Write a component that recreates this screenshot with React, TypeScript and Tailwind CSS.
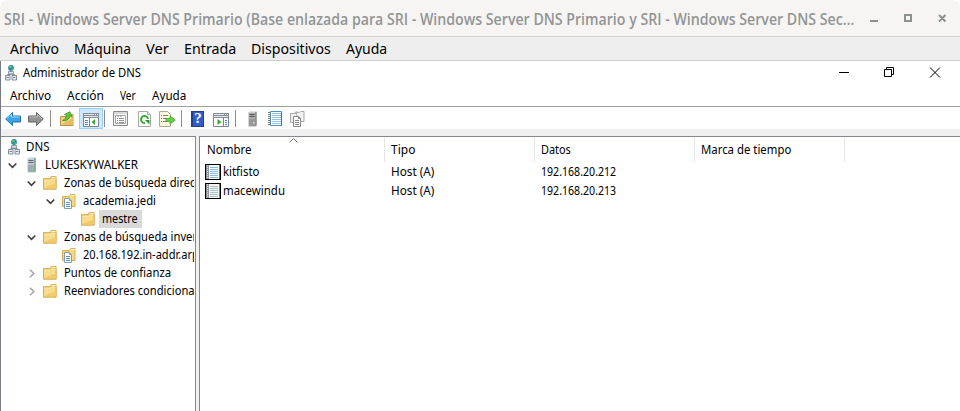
import { useLayoutEffect, useRef, useState, type ReactNode } from "react";

/* Text squeezed or stretched horizontally to a set width. */
function Fit({ w, children, className = "" }: { w: number; children: string; className?: string }) {
  const ref = useRef<HTMLSpanElement>(null);
  const [scale, setScale] = useState(1);
  useLayoutEffect(() => {
    if (ref.current) setScale(w / ref.current.offsetWidth);
  }, [w]);
  return (
    <span className={`block shrink-0 ${className}`} style={{ width: w }}>
      <span ref={ref} className="inline-block origin-left whitespace-pre" style={{ transform: `scaleX(${scale})` }}>
        {children}
      </span>
    </span>
  );
}

function DnsIcon() {
  return (
    <svg width="12" height="16" viewBox="0 0 12 16" className="shrink-0">
      <path d="M6 6v4M2.500 11V9.500h7V11" stroke="#8b949c" fill="none" />
      <circle cx="6" cy="3" r="2.900" fill="#2487b8" />
      <path d="M4 1.500l2-1 1 1.500-1.500 1.500L4 3zM6.500 4l2-1-.5 2-1.500 1z" fill="#63c755" />
      <path d="M3.500 6.500h5v2.500h-5z" fill="#dce3e8" stroke="#7b858e" strokeWidth=".8" />
      <path d="M.5 10.500h4.500V15H.5zM7 10.500h4.500V15H7z" fill="#e8edf1" stroke="#7b858e" strokeWidth=".9" />
      <path d="M1.500 12.500h2.500M8 12.500h2.500" stroke="#7b858e" />
    </svg>
  );
}

function ServerIcon({ light = true }: { light?: boolean }) {
  return (
    <svg width="9" height="16" viewBox="0 0 9 16" className="shrink-0">
      <path d="M.5 1.500l1-1h7v14l-1 1h-7z" fill={light ? "#bfc9d0" : "#adadad"} />
      <path d="M.5 1.500l1-1h7l-1 1z" fill="#e5e9eb" />
      <path d="M7.500 1.500l1-1v14l-1 1z" fill={light ? "#69747c" : "#777"} />
      <path d="M1.500 3.500h5M1.500 5.500h5" stroke={light ? "#5c6971" : "#555"} />
      <path d="M1 8h6v7H1z" fill={light ? "#9eabb4" : "#999"} />
      <path d="M5 11h1.500v1.500H5z" fill={light ? "#69e05b" : "#ddd"} />
    </svg>
  );
}

function FolderIcon() {
  return (
    <svg width="16" height="16" viewBox="0 0 16 16" className="shrink-0">
      <path d="M1 3h7l1-2h5.500v13.500H1z" fill="#e0b459" />
      <path d="M9.500 2h4v2h-4z" fill="#fff6cf" />
      <path d="M1.500 4.500h7l1-1H14V14H1.500z" fill="#f9dc8b" stroke="#dbab4c" />
      <path d="M2 5h6.500l1-1h4" stroke="#fff0bb" fill="none" />
      <path d="M2 13h12V8z" fill="#f2ca6b" />
    </svg>
  );
}

function ZoneIcon() {
  return (
    <svg width="16" height="16" viewBox="0 0 16 16" className="shrink-0">
      <path d="M1.500 3.500h7l1-2h4.500v12H1.500z" fill="#f6d885" stroke="#dbae52" />
      <path d="M9.500 2.500h4" stroke="#fff3c9" />
      <path d="M3.500 5.500h5l2 2v8h-7z" fill="#fff" stroke="#879aaa" />
      <path d="M8.500 5.500v2h2" fill="#d9e3eb" stroke="#879aaa" />
      <path d="M5 9.500h4M5 11.500h4M5 13.500h4" stroke="#4c91cb" />
    </svg>
  );
}

function RecordIcon({ blue }: { blue: boolean }) {
  return (
    <svg width="16" height="16" viewBox="0 0 16 16" className="shrink-0">
      <path d="M0 0h16v16H0z" fill="#000" />
      <path d="M1 1h13v14H1z" fill="#8f969e" />
      <path d="M4 1h10v14H4z" fill={blue ? "#f4faff" : "#f5f4f0"} />
      <path d="M14.500 1v14" stroke={blue ? "#5366ab" : "#737c9f"} />
      <path d="M5 3.500h8M5 5.500h8M5 7.500h8M5 9.500h8M5 11.500h8M5 13.500h8" stroke={blue ? "#85bbdc" : "#a8c1cc"} />
      <path d="M2.500 1v14" stroke="#d8d8d8" strokeDasharray="1 1" />
    </svg>
  );
}

function Arrow({ back = false }: { back?: boolean }) {
  return back ? (
    <svg width="16" height="16" viewBox="0 0 16 16">
      <path d="M.7 8L7.500 1.500V5h8v6h-8v3.500z" fill="#39a4e8" stroke="#246faf" />
      <path d="M2 7.500l4.500-4.300V6h8" fill="none" stroke="#91dcff" />
    </svg>
  ) : (
    <svg width="16" height="16" viewBox="0 0 16 16">
      <path d="M15.300 8L8.500 1.500V5h-8v6h8v3.500z" fill="#929292" stroke="#656565" />
      <path d="M1.500 6h8V3.500L14 8" fill="none" stroke="#bbb" />
    </svg>
  );
}

function UpFolderIcon() {
  return (
    <svg width="16" height="16" viewBox="0 0 16 16">
      <path d="M1.500 5.500H8l1-2h5v11H1.500z" fill="#f3d285" stroke="#bd9549" />
      <path d="M2 14L14 7v7z" fill="#e7bc60" />
      <path d="M3.500 9.500C6 8.500 7 6.500 7.500 4L5.500 3.500 11 .7l2 5-2-.8C10 8 7.500 10.500 3.500 9.500z" fill="#5bc82f" stroke="#35912a" strokeWidth=".7" />
    </svg>
  );
}

function PaneIcon({ right = false }: { right?: boolean }) {
  return (
    <svg width="16" height="14" viewBox="0 0 16 14">
      <path d="M.5.5h15v13H.5z" fill="#fff" stroke="#7d858d" />
      <path d="M0 0h16v5H0z" fill="#858c93" />
      <path d="M1 3.500h14M1 1.500h10" stroke="#e5e8eb" />
      <path d="M12 1.500h1M14 1.500h1" stroke="#fff" />
      {right ? (
        <>
          <path d="M10.500 5v8" stroke="#7d858d" />
          <path d="M12 7.500h2M12 9.500h2M12 11.500h2" stroke="#3989d3" />
          <path d="M4.500 6L8.500 9l-4 3z" fill="#37ac30" />
        </>
      ) : (
        <>
          <path d="M6.500 5v8" stroke="#7d858d" />
          <path d="M2 7.500h3M2 9.500h3M2 11.500h3" stroke="#3989d3" />
          <path d="M12 6L8.500 9l3.500 3z" fill="#37ac30" />
        </>
      )}
    </svg>
  );
}

function PropertiesIcon() {
  return (
    <svg width="15" height="15" viewBox="0 0 15 15">
      <path d="M.5.500h14v14H.5z" fill="#f5f5f5" stroke="#8a8a8a" />
      <path d="M1 2h13" stroke="#bcbcbc" />
      <path d="M2.500 4.500h10v8h-10z" fill="#fff" stroke="#aaa" />
      <path d="M4 5h2M7 5h2M4 7.500h1M6 7.500h5M4 9.500h1M6 9.500h5M4 11.500h1M6 11.500h5" stroke="#929292" />
    </svg>
  );
}

function RefreshIcon() {
  return (
    <svg width="13" height="16" viewBox="0 0 13 16">
      <path d="M.5.500h9l3 3v12H.5z" fill="#fbfcfb" stroke="#a5aaa5" />
      <path d="M9.500.5v3h3" fill="#e5e5e5" stroke="#a5aaa5" />
      <path d="M10 8A3.500 3.500 0 1 0 7 11.900" fill="none" stroke="#3fac38" strokeWidth="2" />
      <path d="M7 9h4.500v4.500z" fill="#249a2f" />
    </svg>
  );
}

function ExportIcon() {
  return (
    <svg width="17" height="16" viewBox="0 0 17 16">
      <path d="M.5.500h8l3 3v12H.5z" fill="#fff8df" stroke="#b4a989" />
      <path d="M2 4.500h1M4 4.500h5M2 7.500h1M4 7.500h4M2 10.500h1M4 10.500h4" stroke="#82807b" />
      <path d="M7 7.500h4V4.700L16.300 9 11 13.300v-2.800H7z" fill="#65cf44" stroke="#3a9d30" strokeWidth=".7" />
    </svg>
  );
}

function HelpIcon() {
  return (
    <span className="flex h-4 w-[13px] items-center justify-center border border-l-2 border-[#223f8e] bg-[#315ec6] font-['Liberation_Serif',serif] text-[15px] font-bold leading-none text-white">
      ?
    </span>
  );
}

function NotebookIcon() {
  return (
    <svg width="15" height="15" viewBox="0 0 15 15">
      <path d="M2.500.500h11v14h-11z" fill="#fff" stroke="#4f8fc1" />
      <path d="M13.500 1v14" stroke="#3574ad" />
      <path d="M4 2.500h9M4 4.500h9M4 6.500h9M4 8.500h9M4 10.500h9M4 12.500h9" stroke="#8fc4e4" />
      <path d="M0 1.500h3M0 3.500h3M0 5.500h3M0 7.500h3M0 9.500h3M0 11.500h3M0 13.500h3" stroke="#727a80" />
    </svg>
  );
}

function CopiesIcon() {
  return (
    <svg width="15" height="16" viewBox="0 0 15 16">
      <path d="M.5 3.500V2.500h4l1-1.500h3v2.500M.5 2.500v9h10v-9z" fill="#eee" stroke="#aaa" />
      <path d="M6.500 3.500V1.500h3l1-1h3.500v10h-4z" fill="#f2f2f2" stroke="#aaa" />
      <path d="M3.500 5.500h5l2 2v8h-7z" fill="#fff" stroke="#888" />
      <path d="M8.500 5.500v2h2M5 9.500h4M5 11.500h4M5 13.500h4" fill="none" stroke="#888" />
    </svg>
  );
}

function Chevron({ state }: { state?: "open" | "closed" }) {
  return (
    <svg width="10" height="10" viewBox="0 0 10 10" className="shrink-0">
      {state === "open" && <path d="M1.700 3.500L5.500 7.300 9.300 3.500" fill="none" stroke="#404040" strokeWidth="1.700" />}
      {state === "closed" && <path d="M4 1.700L7.800 5.500 4 9.300" fill="none" stroke="#a6a6a6" strokeWidth="1.600" />}
    </svg>
  );
}

function Tool({ children, className }: { children: ReactNode; className: string }) {
  return <div className={`flex h-[21px] shrink-0 items-center ${className}`}>{children}</div>;
}

function Sep({ className }: { className: string }) {
  return <div className={`h-[17px] w-px shrink-0 bg-[#8d8d8d] ${className}`} />;
}

function TreeRow({ pad, state, icon, gap, children }: { pad: string; state?: "open" | "closed"; icon: ReactNode; gap: string; children: ReactNode }) {
  return (
    <div className={`flex h-[18px] items-center ${pad}`}>
      <Chevron state={state} />
      <div className={`flex shrink-0 ${gap}`}>{icon}</div>
      {children}
    </div>
  );
}

const records = [
  { name: "kitfisto", w: 36, ip: "192.168.20.212", blue: true },
  { name: "macewindu", w: 62, ip: "192.168.20.213", blue: false },
];

export default function App() {
  return (
    <div className="flex h-[411px] w-[960px] flex-col overflow-hidden bg-white font-['Noto_Sans',sans-serif] text-xs leading-[18px] text-black">
      <div className="flex h-[37px] shrink-0 items-center rounded-t-lg border-b border-[#d5d0cc] bg-[#f6f5f4] pl-1 pt-px font-['Open_Sans','Noto_Sans',sans-serif] text-base font-semibold text-[#929595]">
        <Fit w={850}>SRI - Windows Server DNS Primario (Base enlazada para SRI - Windows Server DNS Primario y SRI - Windows Server DNS Sec…</Fit>
        <svg width="78" height="12" viewBox="0 0 78 12" className="mb-px ml-4" fill="none" stroke="#8c9090" strokeWidth="2">
          <path d="M0 9h8M35 3h6v6h-6zM69 3l6.500 6.500M75.500 3L69 9.500" />
        </svg>
      </div>
      <div className="flex h-6 shrink-0 items-center gap-[15px] border-b border-[#cfcfcf] bg-[#eee] pl-[10px] text-sm">
        <Fit w={49}>Archivo</Fit>
        <Fit w={57}>Máquina</Fit>
        <Fit w={23}>Ver</Fit>
        <Fit w={52}>Entrada</Fit>
        <Fit w={80}>Dispositivos</Fit>
        <Fit w={41}>Ayuda</Fit>
      </div>

      <div className="flex min-h-0 grow flex-col border-l border-[#777b84]">
        <div className="flex h-6 shrink-0 items-center pl-1">
          <DnsIcon />
          <Fit w={118} className="ml-1.5">Administrador de DNS</Fit>
          <svg width="104" height="14" viewBox="0 0 104 14" className="mb-0.5 ml-[697px]" fill="none" stroke="#000">
            <path d="M1 7.500h10M46.500 4.500h7v7h-7zM48.500 4V2.500h7v7H54M92 2.500l10 10M102 2.500l-10 10" />
          </svg>
        </div>
        <div className="flex h-[22px] shrink-0 items-center gap-4 border-b border-[#a0a0a0] pl-[9px]">
          <Fit w={41}>Archivo</Fit>
          <Fit w={37}>Acción</Fit>
          <Fit w={16}>Ver</Fit>
          <Fit w={34}>Ayuda</Fit>
        </div>
        <div className="flex h-[22px] shrink-0 items-center pl-1 pt-px">
          <Tool className="w-[23px]"><Arrow back /></Tool>
          <Tool className="w-[22px]"><Arrow /></Tool>
          <Sep className="mr-2" />
          <Tool className="w-5"><UpFolderIcon /></Tool>
          <Tool className="w-6 justify-center border border-[#99d1ff] bg-[#cce8ff] pt-0.5"><PaneIcon /></Tool>
          <Sep className="ml-px mr-2" />
          <Tool className="w-[25px]"><PropertiesIcon /></Tool>
          <Tool className="w-[21px]"><RefreshIcon /></Tool>
          <Tool className="w-[22px]"><ExportIcon /></Tool>
          <Sep className="mr-[9px]" />
          <Tool className="w-[22px]"><HelpIcon /></Tool>
          <Tool className="w-[22px] pt-0.5"><PaneIcon right /></Tool>
          <Sep className="mr-3" />
          <Tool className="w-5"><ServerIcon light={false} /></Tool>
          <Tool className="w-[22px]"><NotebookIcon /></Tool>
          <Tool className="w-4"><CopiesIcon /></Tool>
        </div>

        <div className="flex min-h-0 grow bg-[#f0f0f0] pt-[7px]">
          <div className="w-[195px] shrink-0 border-r border-t border-[#828790] bg-white pt-px">
            <div className="w-[193px] overflow-hidden">
              <TreeRow pad="-ml-[3px]" icon={<DnsIcon />} gap="w-[18px]"><Fit w={23}>DNS</Fit></TreeRow>
              <TreeRow pad="pl-1.5" state="open" icon={<ServerIcon />} gap="ml-[10px] w-[18px]"><Fit w={93}>LUKESKYWALKER</Fit></TreeRow>
              <TreeRow pad="pl-[25px]" state="open" icon={<FolderIcon />} gap="ml-1.5 w-[22px]"><Fit w={131}>Zonas de búsqueda direc</Fit></TreeRow>
              <TreeRow pad="pl-11" state="open" icon={<ZoneIcon />} gap="ml-1.5 w-[22px]"><Fit w={73}>academia.jedi</Fit></TreeRow>
              <TreeRow pad="pl-[63px]" icon={<FolderIcon />} gap="ml-1.5 w-[19px]">
                <div className="flex h-[18px] w-[43px] items-center bg-[#d9d9d9] pl-[3px]"><Fit w={36}>mestre</Fit></div>
              </TreeRow>
              <TreeRow pad="pl-[25px]" state="open" icon={<FolderIcon />} gap="ml-1.5 w-[22px]"><Fit w={133}>Zonas de búsqueda inver</Fit></TreeRow>
              <TreeRow pad="pl-11" icon={<ZoneIcon />} gap="ml-1.5 w-[22px]"><Fit w={116}>20.168.192.in-addr.arp</Fit></TreeRow>
              <TreeRow pad="pl-[25px]" state="closed" icon={<FolderIcon />} gap="ml-1.5 w-[22px]"><Fit w={107}>Puntos de confianza</Fit></TreeRow>
              <TreeRow pad="pl-[25px]" state="closed" icon={<FolderIcon />} gap="ml-1.5 w-[22px]"><Fit w={131}>Reenviadores condiciona</Fit></TreeRow>
            </div>
          </div>

          <div className="ml-[3px] grow border-l border-t border-[#828790] bg-white">
            <div className="mt-px flex h-6 items-center">
              <div className="relative flex h-6 w-[185px] items-center border-r border-[#e5e5e5] pl-[7px]">
                <Fit w={44}>Nombre</Fit>
                <svg width="9" height="5" viewBox="0 0 9 5" className="absolute left-[89px] top-0" fill="none" stroke="#777">
                  <path d="M.5 4.500l4-4 4 4" />
                </svg>
              </div>
              <div className="flex h-6 w-[150px] items-center border-r border-[#e5e5e5] pl-1.5"><Fit w={24}>Tipo</Fit></div>
              <div className="flex h-6 w-40 items-center border-r border-[#e5e5e5] pl-1.5"><Fit w={30}>Datos</Fit></div>
              <div className="flex h-6 w-[150px] items-center border-r border-[#e5e5e5] pl-1.5"><Fit w={90}>Marca de tiempo</Fit></div>
            </div>
            {records.map((r) => (
              <div key={r.name} className="flex h-[19px] items-center pl-[5px]">
                <div className="flex w-[186px] items-center gap-0.5">
                  <RecordIcon blue={r.blue} />
                  <Fit w={r.w}>{r.name}</Fit>
                </div>
                <div className="w-[150px]"><Fit w={43}>Host (A)</Fit></div>
                <Fit w={75}>{r.ip}</Fit>
              </div>
            ))}
          </div>
        </div>
      </div>
    </div>
  );
}
